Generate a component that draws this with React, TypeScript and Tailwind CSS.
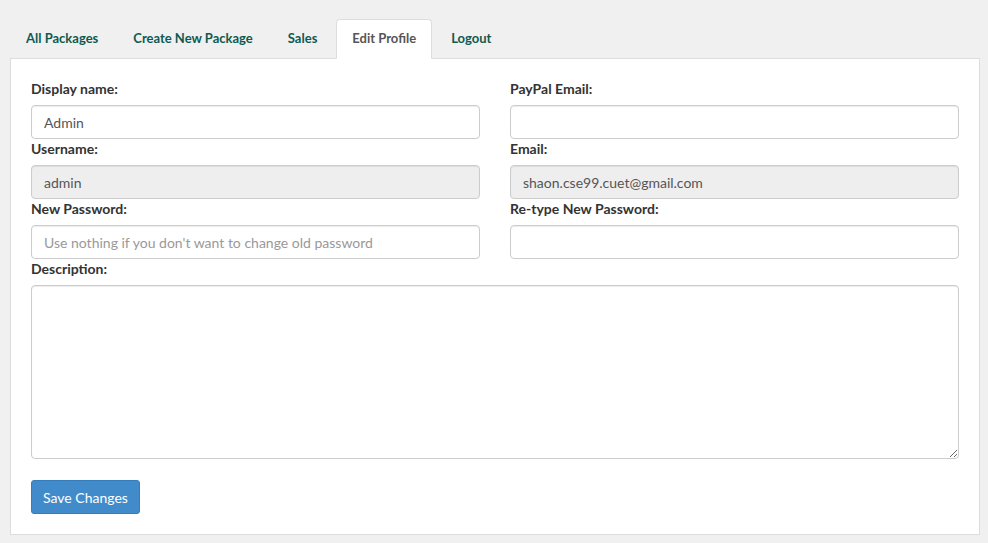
import React from 'react';

const TABS = ['All Packages', 'Create New Package', 'Sales', 'Edit Profile', 'Logout'];
const ACTIVE = 'Edit Profile';

const inputBase =
  'block w-full h-[34px] px-3 border border-[#ccc] rounded-[4px] text-[14px] text-[#555] placeholder:text-[#999] outline-none shadow-[inset_0_1px_1px_rgba(0,0,0,0.075)]';

const Field: React.FC<{ label: string; value?: string; placeholder?: string; disabled?: boolean }> = ({
  label,
  value,
  placeholder,
  disabled,
}) => (
  <div>
    <label className="block text-[14px] leading-[20px] font-bold text-[#333] mb-[6px]">{label}</label>
    <input
      className={`${inputBase} ${disabled ? 'bg-[#eee]' : 'bg-white'}`}
      defaultValue={value}
      placeholder={placeholder}
      disabled={disabled}
    />
  </div>
);

export default function App() {
  return (
    <div className="min-h-[543px] bg-[#f0f0f0] pl-[10px] pr-[8px] pt-[19px] pb-[9px]" style={{ fontFamily: 'Lato, "Open Sans", sans-serif' }}>
      {/* Tabs */}
      <div className="flex gap-[3px] -mb-px relative z-10">
        {TABS.map(t => (
          <div
            key={t}
            className={`h-[40px] px-[15px] flex items-center text-[13px] font-bold rounded-t-[4px] border ${
              t === ACTIVE ? 'bg-white border-[#ddd] border-b-white text-[#555]' : 'border-transparent text-[#0f5a50]'
            }`}
          >
            {t}
          </div>
        ))}
      </div>

      {/* Panel */}
      <div className="bg-white border border-[#ddd] p-5">
        <div className="grid grid-cols-2 gap-x-[30px]">
          <Field label="Display name:" value="Admin" />
          <Field label="PayPal Email:" />
          <Field label="Username:" value="admin" disabled />
          <Field label="Email:" value="shaon.cse99.cuet@gmail.com" disabled />
          <Field label="New Password:" placeholder="Use nothing if you don't want to change old password" />
          <Field label="Re-type New Password:" />
        </div>
        <label className="block text-[14px] leading-[20px] font-bold text-[#333] mb-[6px]">Description:</label>
        <textarea className="block w-full h-[174px] border border-[#ccc] rounded-[4px] px-3 py-2 text-[14px] text-[#555] outline-none shadow-[inset_0_1px_1px_rgba(0,0,0,0.075)]" />
        <button className="mt-[21px] h-[34px] px-[11px] bg-[#428bca] border border-[#357ebd] rounded-[3px] text-white text-[14px]">
          Save Changes
        </button>
      </div>
    </div>
  );
}
